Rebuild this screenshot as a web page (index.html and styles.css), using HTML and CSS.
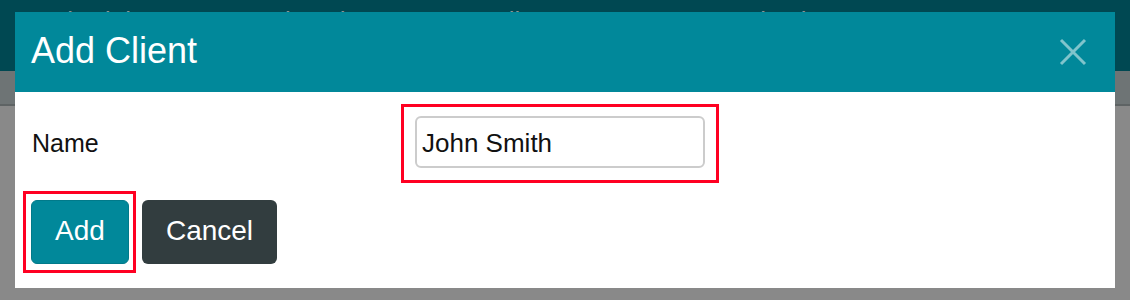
FILE: index.html
```html
<!DOCTYPE html>
<html lang="en">
<head>
<meta charset="utf-8">
<title>Add Client</title>
<link rel="stylesheet" href="styles.css">
</head>
<body>
<div class="page">
  <nav class="topnav">
    <span class="nav-item nav-schedule">Schedule</span>
    <span class="nav-item nav-time">Timesheets</span>
    <span class="nav-item nav-clients">Clients</span>
    <span class="nav-item nav-org">Organization</span>
    <span class="nav-item nav-reports">Reports</span>
  </nav>
  <div class="subbar"></div>
  <div class="backdrop"></div>

  <div class="modal">
    <div class="modal-header">
      <h1 class="modal-title">Add Client</h1>
      <button class="modal-close" aria-label="Close">
        <svg width="28" height="28" viewBox="0 0 28 28">
          <path d="M2 2 L26 26 M26 2 L2 26" stroke="#80c4cc" stroke-width="3" fill="none"/>
        </svg>
      </button>
    </div>
    <div class="modal-body">
      <div class="form-row">
        <label class="field-label" for="client-name">Name</label>
        <span class="highlight highlight-input">
          <input id="client-name" class="text-input" type="text" value="John Smith">
        </span>
      </div>
      <div class="actions">
        <span class="highlight highlight-btn">
          <button class="btn btn-primary">Add</button>
        </span>
        <button class="btn btn-dark">Cancel</button>
      </div>
    </div>
  </div>
</div>
</body>
</html>
```
FILE: styles.css
```css
* { box-sizing: border-box; }

html, body {
  margin: 0;
  padding: 0;
}

body {
  width: 1130px;
  height: 300px;
  overflow: hidden;
  background: #898989;
  font-family: "Liberation Sans", Arial, Helvetica, sans-serif;
}

.page {
  position: relative;
  width: 1130px;
  height: 300px;
}

.topnav {
  display: flex;
  height: 71px;
  padding-top: 8px;
  background: #004852;
}

.nav-item {
  font-size: 26px;
  line-height: 26px;
  color: #8d9495;
  white-space: nowrap;
}

.nav-schedule { margin-left: 37px; width: 233px; }
.nav-time { width: 220px; }
.nav-clients { width: 198px; }
.nav-org { width: 254px; }
.nav-reports { }

.subbar {
  height: 35px;
  background: #6e7475;
  border-bottom: 2px solid #5e6364;
}

.backdrop {
  height: 194px;
  background: #898989;
}

.modal {
  position: absolute;
  left: 15px;
  top: 12px;
  width: 1100px;
  height: 276px;
  background: #ffffff;
  display: flex;
  flex-direction: column;
}

.modal-header {
  height: 80px;
  background: #01889a;
  display: flex;
  align-items: center;
  justify-content: space-between;
  padding: 0 28px 0 16px;
}

.modal-title {
  margin: 0;
  padding-bottom: 3px;
  font-size: 36px;
  font-weight: normal;
  color: #ffffff;
  line-height: 1.15;
}

.modal-close {
  width: 28px;
  height: 28px;
  padding: 0;
  border: 0;
  background: transparent;
  display: flex;
}

.modal-body {
  padding: 12px 0 0 8px;
  display: flex;
  flex-direction: column;
  gap: 8px;
}

.form-row {
  display: flex;
  align-items: center;
}

.field-label {
  width: 378px;
  padding-left: 9px;
  font-size: 25px;
  color: #111111;
}

.highlight {
  display: inline-flex;
  border: 3px solid #ff0022;
}

.highlight-input {
  padding: 9px 11px 12px 11px;
}

.text-input {
  width: 290px;
  height: 52px;
  border: 2px solid #cccccc;
  border-radius: 6px;
  padding: 2px 0 0 5px;
  font-family: "Liberation Sans", Arial, Helvetica, sans-serif;
  font-size: 26px;
  color: #111111;
  background: #ffffff;
}

.actions {
  display: flex;
  align-items: center;
  gap: 6px;
}

.highlight-btn {
  padding: 6px 4px 6px 5px;
}

.btn {
  height: 64px;
  padding: 0 24px;
  border: 0;
  border-radius: 6px;
  font-family: "Liberation Sans", Arial, Helvetica, sans-serif;
  font-size: 28px;
  color: #ffffff;
  display: flex;
  align-items: center;
  padding-bottom: 3px;
}

.btn-primary {
  width: 98px;
  justify-content: center;
  background: #01889a;
  border: 1px solid #017a8a;
}

.btn-dark {
  width: 135px;
  justify-content: center;
  background: #323d3f;
}
```
